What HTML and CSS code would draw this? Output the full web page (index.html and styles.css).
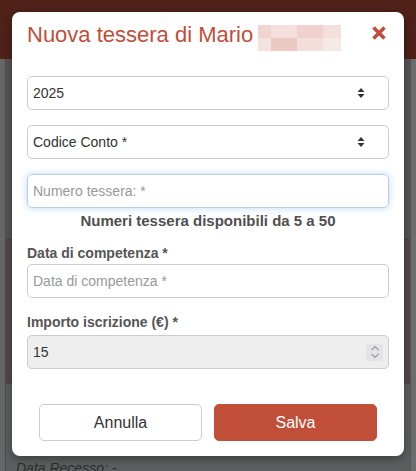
FILE: index.html
```html
<!DOCTYPE html>
<html lang="it">
<head>
<meta charset="utf-8">
<title>Nuova tessera</title>
<link rel="stylesheet" href="styles.css">
</head>
<body>
<div class="page">
  <div class="topbar"></div>
  <div class="content">
    <div class="edge"></div>
    <div class="main">
      <div class="sec sec1"></div>
      <div class="sec sec2"></div>
      <div class="sec sec3"><span class="recesso">Data Recesso: -</span></div>
    </div>
    <div class="scroll"></div>
  </div>
</div>

<div class="modal">
  <div class="modal-header">
    <h1 class="title">Nuova tessera di Mario</h1>
    <div class="mosaic">
      <div class="mrow"><i class="c1"></i><i class="c2"></i><i class="c3"></i><i class="c4"></i></div>
      <div class="mrow"><i class="d1"></i><i class="d2"></i><i class="d3"></i><i class="d4"></i></div>
    </div>
    <button class="close" aria-label="Chiudi">
      <svg width="16" height="16" viewBox="0 0 16 16"><path d="M2.5 2.5 L13.5 13.5 M13.5 2.5 L2.5 13.5" stroke="#c14e39" stroke-width="3.6" stroke-linecap="butt"/></svg>
    </button>
  </div>
  <div class="modal-body">
    <div class="field select">
      <span class="val">2025</span>
      <svg class="arrows" width="8" height="12" viewBox="0 0 8 12"><path d="M4 1 L7.5 5 L0.5 5 Z M0.5 7 L7.5 7 L4 11 Z" fill="#333"/></svg>
    </div>
    <div class="field select">
      <span class="val">Codice Conto *</span>
      <svg class="arrows" width="8" height="12" viewBox="0 0 8 12"><path d="M4 1 L7.5 5 L0.5 5 Z M0.5 7 L7.5 7 L4 11 Z" fill="#333"/></svg>
    </div>
    <div class="field focus"><span class="ph">Numero tessera: *</span></div>
    <p class="hint">Numeri tessera disponibili da 5 a 50</p>
    <label class="lbl">Data di competenza *</label>
    <div class="field"><span class="ph">Data di competenza *</span></div>
    <label class="lbl lbl2">Importo iscrizione (€) *</label>
    <div class="field disabled">
      <span class="val">15</span>
      <span class="spin">
        <svg width="10" height="14" viewBox="0 0 10 14"><path d="M1.5 5 L5 1.5 L8.5 5 M1.5 9 L5 12.5 L8.5 9" fill="none" stroke="#9a9a9a" stroke-width="1.2"/></svg>
      </span>
    </div>
  </div>
  <div class="modal-footer">
    <button class="btn btn-default">Annulla</button>
    <button class="btn btn-primary">Salva</button>
  </div>
</div>
</body>
</html>
```

FILE: styles.css
```css
* { box-sizing: border-box; }
html, body { margin: 0; padding: 0; }
body {
  width: 416px;
  height: 471px;
  overflow: hidden;
  font-family: "Liberation Sans", Arial, sans-serif;
  background: #5d5f5f;
  position: relative;
}
.page { display: flex; flex-direction: column; height: 471px; }
.topbar { height: 59px; background: #4f2119; flex: none; }
.content { flex: 1; display: flex; }
.edge { width: 6px; background: #656666; border-right: 1px solid #4d4d4d; }
.main { flex: 1; display: flex; flex-direction: column; }
.sec1 { height: 180px; background: #565454; flex: none; }
.sec2 { height: 145px; background: #524a48; border-top: 1px solid #4a4444; border-bottom: 1px solid #4a4a4a; flex: none; }
.sec3 { flex: 1; background: #5c5f5f; display: flex; align-items: flex-end; padding-left: 10px; }
.recesso { font-style: italic; font-size: 14px; color: #2b2d2d; line-height: 16px; margin-bottom: -5px; }
.scroll { width: 6px; background: #6c6d6d; border-left: 1px solid #555; }

.modal {
  position: absolute;
  left: 12px;
  top: 12px;
  width: 392px;
  height: 444px;
  background: #fff;
  border-radius: 8px;
  box-shadow: 0 3px 10px rgba(0,0,0,0.35);
  display: flex;
  flex-direction: column;
}
.modal > * { flex: none; }
.modal-header {
  display: flex;
  align-items: flex-start;
  padding: 11px 15px 0 15px;
  height: 64px;
}
.title {
  margin: 0;
  font-weight: normal;
  font-size: 22px;
  line-height: 24px;
  color: #c14e39;
  white-space: nowrap;
}
.mosaic { margin-left: 5px; margin-top: 2px; display: flex; flex-direction: column; }
.mrow { display: flex; }
.mrow i { display: block; height: 13px; }
.c1, .d1 { width: 13px; }
.c2, .d2 { width: 26px; }
.c3, .d3 { width: 26px; }
.c4, .d4 { width: 18px; }
.c1 { background: #f0d4cf; }
.c2 { background: #f3dfdc; }
.c3 { background: #efd2ce; }
.c4 { background: #f3e0dd; }
.d1 { background: #f4e2df; }
.d2 { background: #ecc9c3; }
.d3 { background: #f3dedb; }
.d4 { background: #f5e9e7; }
.close {
  margin-left: auto;
  margin-top: 2px;
  margin-right: 2px;
  background: none;
  border: 0;
  padding: 0;
  width: 16px;
  height: 16px;
  display: flex;
}

.modal-body { padding: 0 15px; display: flex; flex-direction: column; }
.modal-body > * { flex: none; }
.field {
  height: 34px;
  border: 1px solid #ccc;
  border-radius: 5px;
  display: flex;
  align-items: center;
  padding: 0 5px 0 5px;
  font-size: 14px;
  color: #333;
  margin-bottom: 15px;
}
.select { padding-right: 23px; }
.select .arrows { margin-left: auto; }
.val { color: #333; }
.ph { color: #999; }
.focus {
  border-color: #b9cfe6;
  box-shadow: 0 0 7px rgba(102, 175, 233, 0.45);
  margin-bottom: 0;
}
.hint {
  margin: 4px 0 0 0;
  text-align: center;
  font-weight: bold;
  font-size: 15px;
  line-height: 18px;
  color: #505050;
}
.lbl {
  display: block;
  margin-top: 13px;
  margin-bottom: 1px;
  font-weight: bold;
  font-size: 14px;
  line-height: 20px;
  color: #555;
}
.lbl2 { margin-top: -1px; margin-bottom: 3px; }
.disabled {
  background: #eee;
  padding-right: 5px;
  margin-bottom: 0;
}
.spin {
  margin-left: auto;
  width: 17px;
  height: 17px;
  background: #e3e3e6;
  border-radius: 2px;
  display: flex;
  align-items: center;
  justify-content: center;
}

.modal-footer {
  display: flex;
  gap: 12px;
  padding: 0 27px;
  margin-top: 35px;
}
.btn {
  width: 163px;
  height: 37px;
  border-radius: 5px;
  font-family: "Liberation Sans", Arial, sans-serif;
  font-size: 16px;
  cursor: pointer;
}
.btn-default { background: #fff; border: 1px solid #ccc; color: #333; }
.btn-primary { background: #c14e39; border: 1px solid #c14e39; color: #fff; }
```
